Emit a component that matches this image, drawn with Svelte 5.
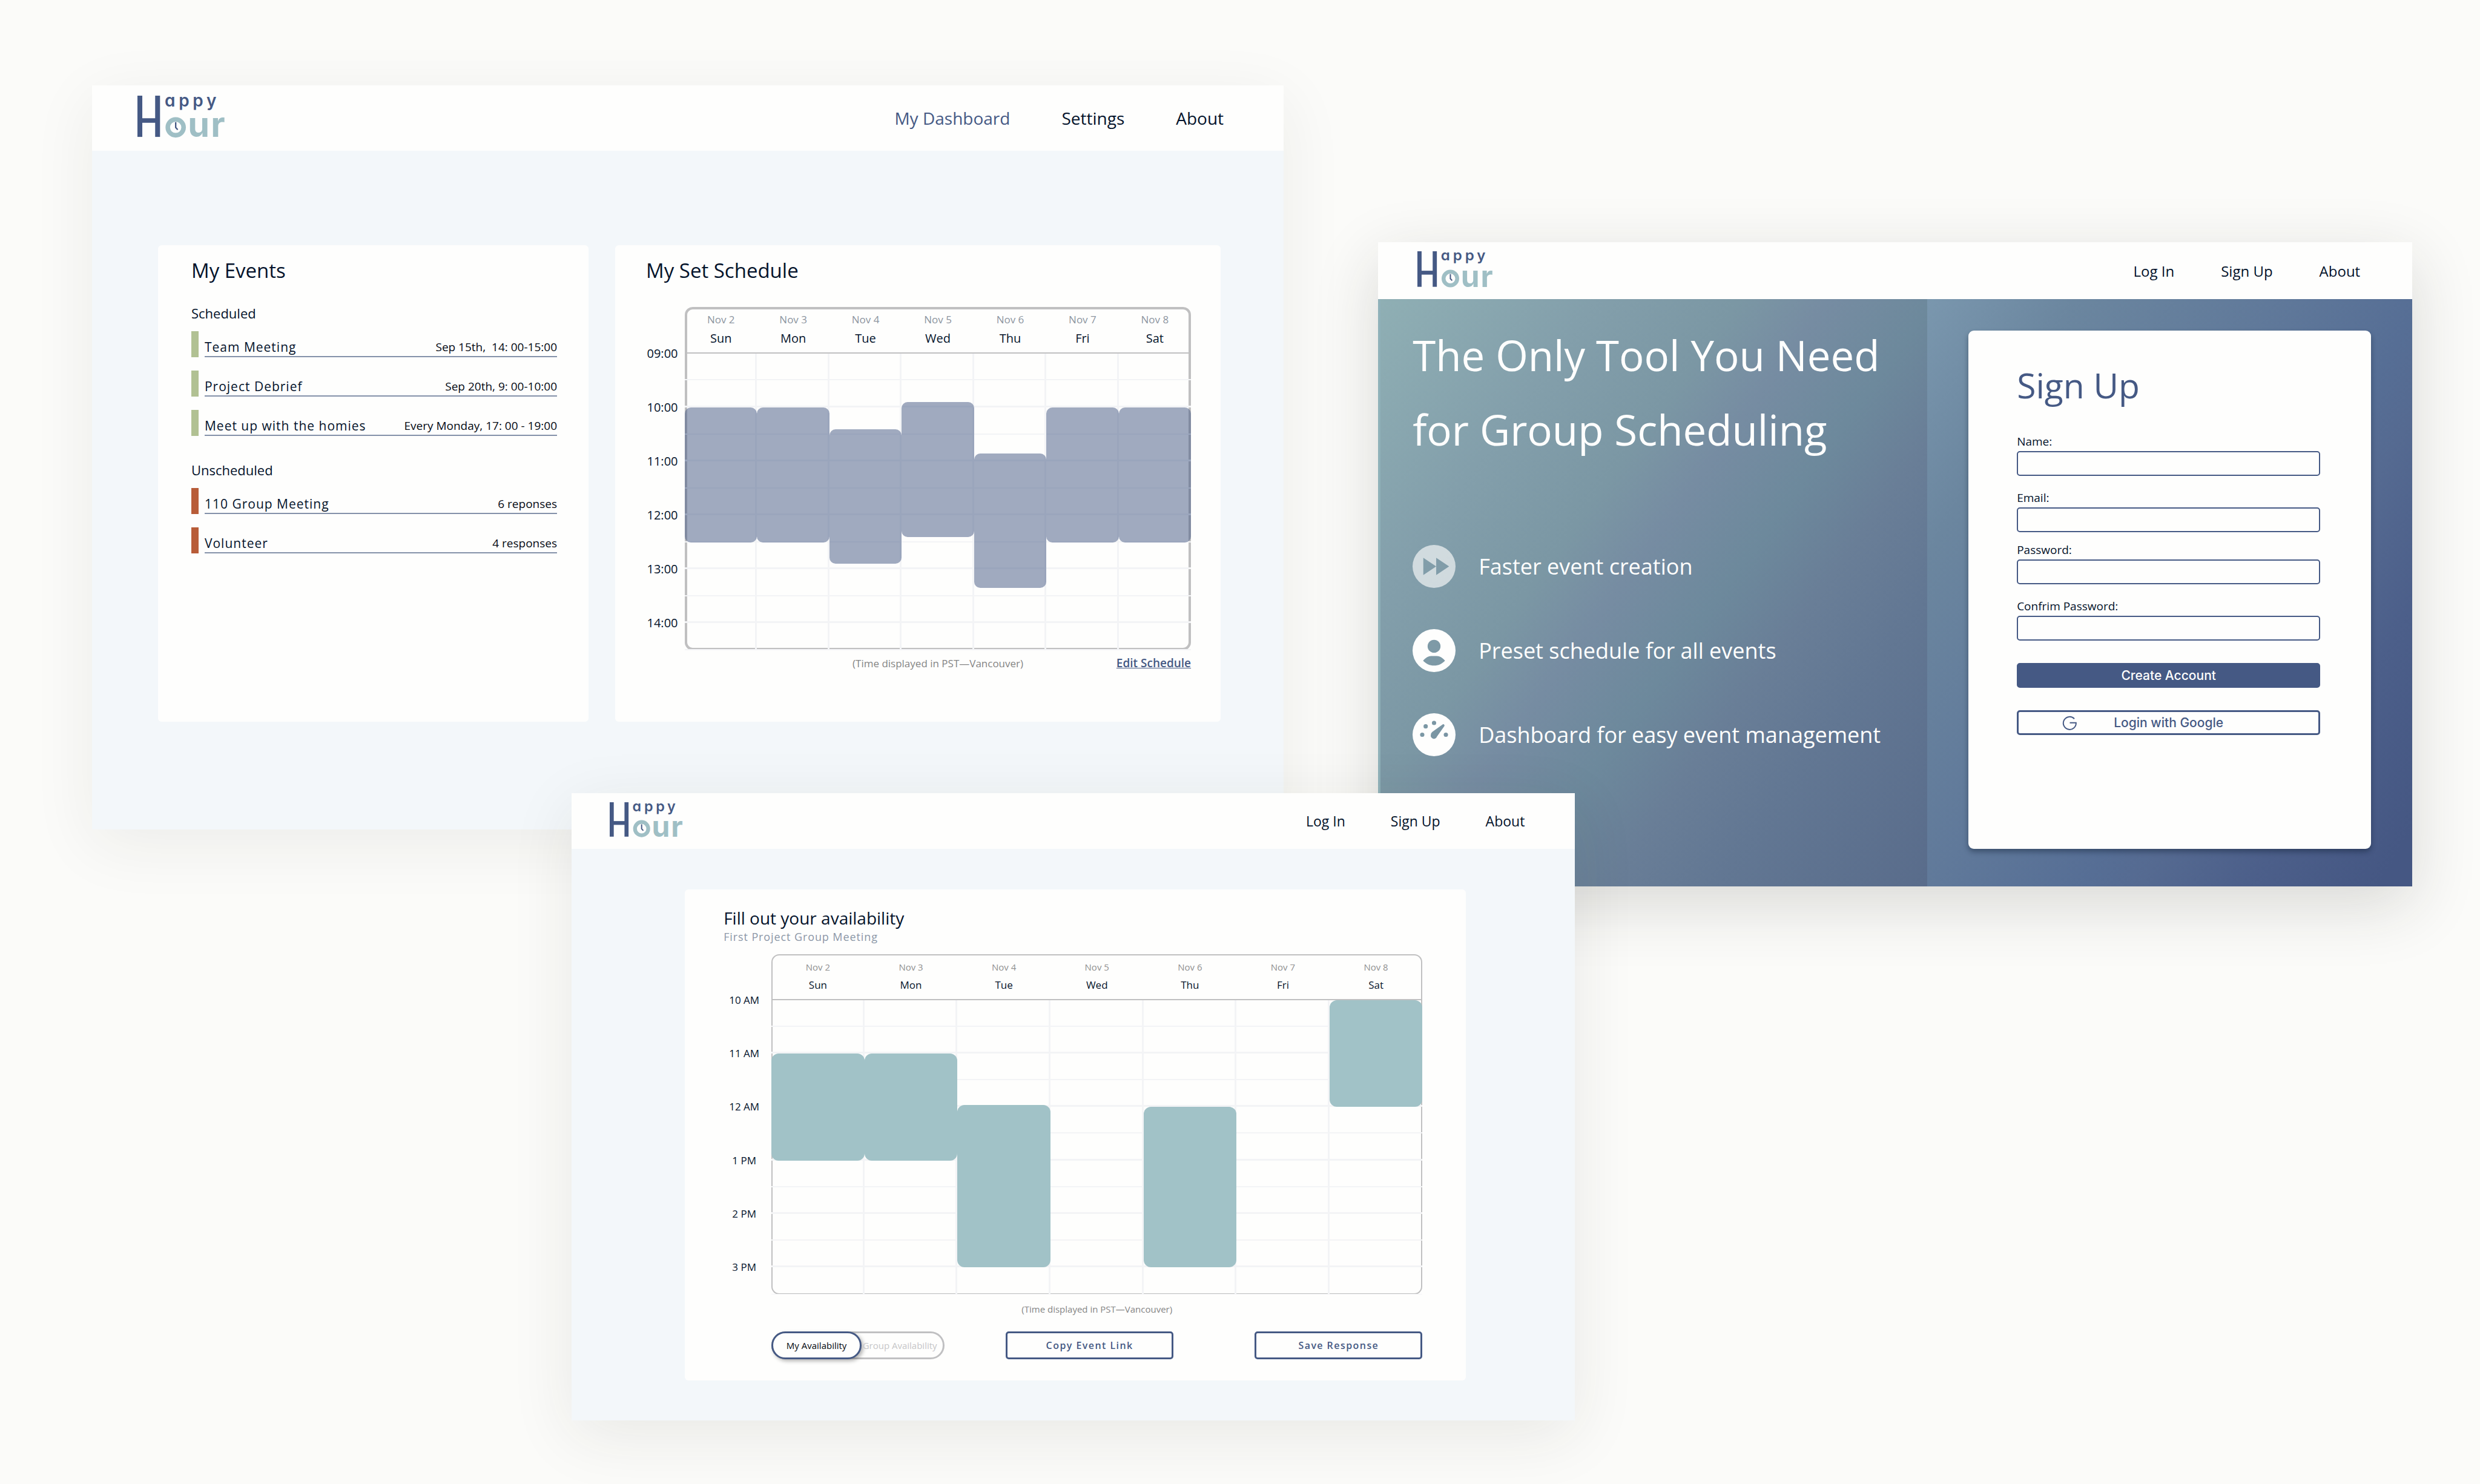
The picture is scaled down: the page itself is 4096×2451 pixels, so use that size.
<script>
  const scheduled = [
    { name: 'Team Meeting', when: 'Sep 15th,\u00a0 14: 00-15:00' },
    { name: 'Project Debrief', when: 'Sep 20th, 9: 00-10:00' },
    { name: 'Meet up with the homies', when: 'Every Monday, 17: 00 - 19:00' }
  ];
  const unscheduled = [
    { name: '110 Group Meeting', when: '6 reponses' },
    { name: 'Volunteer', when: '4 responses' }
  ];

  const days = ['Sun', 'Mon', 'Tue', 'Wed', 'Thu', 'Fri', 'Sat'].map((name, i) => ({
    name,
    date: `Nov ${i + 2}`
  }));
  const cells = Array.from({ length: 77 }, (_, i) => i);

  // Blocks are [day index, start hour, end hour].
  const schedule = {
    first: 9,
    labels: ['09:00', '10:00', '11:00', '12:00', '13:00', '14:00'],
    blocks: [
      [0, 10, 12.5],
      [1, 10, 12.5],
      [2, 10.4, 12.9],
      [3, 9.9, 12.4],
      [4, 10.85, 13.35],
      [5, 10, 12.5],
      [6, 10, 12.5]
    ]
  };
  const availability = {
    first: 10,
    labels: ['10 AM', '11 AM', '12 AM', '1 PM', '2 PM', '3 PM'],
    blocks: [
      [0, 11, 13],
      [1, 11, 13],
      [2, 11.96, 15],
      [4, 12, 15],
      [6, 10, 12]
    ]
  };

  const fields = [
    { id: 'name', label: 'Name:', type: 'text' },
    { id: 'email', label: 'Email:', type: 'email' },
    { id: 'password', label: 'Password:', type: 'password' },
    { id: 'confirm', label: 'Confrim Password:', type: 'password' }
  ];

  const hoursShown = 5.5;
  const share = (part, whole) => `${(part / whole) * 100}%`;
</script>

{#snippet logo()}
  <svg class="logo" viewBox="97 69 560 268" role="img" aria-label="Happy Hour">
    <g fill="#455984">
      <rect x="97" y="69" width="31" height="263" />
      <rect x="210" y="69" width="31" height="263" />
      <rect x="120" y="213" width="100" height="29" />
    </g>
    <text class="logo-top" x="271" y="138">appy</text>
    <circle cx="341" cy="271" r="50.5" fill="none" stroke="#9fbfc5" stroke-width="29" />
    <path d="M341 238V272L354 286" fill="none" stroke="#455984" stroke-width="9" />
    <text class="logo-bottom" x="419" y="332">ur</text>
  </svg>
{/snippet}

{#snippet topbar(links, current)}
  <header class="topbar">
    <a class="home" href="#home">{@render logo()}</a>
    <nav>
      {#each links as link}
        <a href="#top" class:current={link === current}>{link}</a>
      {/each}
    </nav>
  </header>
{/snippet}

{#snippet eventList(title, events, tone)}
  <section class="event-group">
    <h3>{title}</h3>
    <ul>
      {#each events as event}
        <li class={tone}>
          <div class="event">
            <span class="event-name">{event.name}</span>
            <span class="event-when">{event.when}</span>
          </div>
        </li>
      {/each}
    </ul>
  </section>
{/snippet}

{#snippet calendar(data)}
  <div class="calendar">
    <div class="hours">
      {#each data.labels as label}<span>{label}</span>{/each}
    </div>
    <div class="board">
      <div class="days">
        {#each days as day}
          <div class="day">
            <span class="date">{day.date}</span>
            <span class="weekday">{day.name}</span>
          </div>
        {/each}
      </div>
      <div class="slots">
        {#each cells as cell (cell)}<div class="cell"></div>{/each}
        {#each data.blocks as [day, from, to]}
          <div
            class="block"
            style:left={share(day, 7)}
            style:top={share(from - data.first, hoursShown)}
            style:height={share(to - from, hoursShown)}
          ></div>
        {/each}
      </div>
    </div>
  </div>
{/snippet}

<main class="stage">
  <section class="window dashboard">
    {@render topbar(['My Dashboard', 'Settings', 'About'], 'My Dashboard')}
    <div class="dashboard-body">
      <article class="card events-card">
        <h2>My Events</h2>
        {@render eventList('Scheduled', scheduled, 'green')}
        {@render eventList('Unscheduled', unscheduled, 'rust')}
      </article>
      <article class="card schedule-card">
        <h2>My Set Schedule</h2>
        {@render calendar(schedule)}
        <footer>
          <p class="note">(Time displayed in PST—Vancouver)</p>
          <a href="#edit">Edit Schedule</a>
        </footer>
      </article>
    </div>
  </section>

  <section class="window landing">
    {@render topbar(['Log In', 'Sign Up', 'About'], '')}
    <div class="hero">
      <div class="pitch">
        <h1>The Only Tool You Need<br />for Group Scheduling</h1>
        <ul class="features">
          <li>
            <svg class="faded" viewBox="-10 -10 20 20" aria-hidden="true">
              <path
                fill-rule="evenodd"
                d="M-10 0a10 10 0 1 0 20 0a10 10 0 1 0 -20 0zM-5 -4L1 0L-5 4zM1 -4L7 0L1 4z"
              />
            </svg>
            Faster event creation
          </li>
          <li>
            <svg viewBox="-10 -10 20 20" aria-hidden="true">
              <path
                fill-rule="evenodd"
                d="M-10 0a10 10 0 1 0 20 0a10 10 0 1 0 -20 0zM-3 -2a3 3 0 1 0 6 0a3 3 0 1 0 -6 0zM-5.1 4.7C-4 3.4 -2.6 2.55 -1.4 2.55H1.4C2.6 2.55 4 3.4 5.1 4.7C3.8 6.1 2 7 0 7C-2 7 -3.8 6.1 -5.1 4.7z"
              />
            </svg>
            Preset schedule for all events
          </li>
          <li>
            <svg viewBox="-10 -10 20 20" aria-hidden="true">
              <path
                fill-rule="evenodd"
                d="M-10 0a10 10 0 1 0 20 0a10 10 0 1 0 -20 0zM-6.5 0a1 1 0 1 0 2 0a1 1 0 1 0 -2 0zM-4.9 -3.9a1 1 0 1 0 2 0a1 1 0 1 0 -2 0zM-1 -5.5a1 1 0 1 0 2 0a1 1 0 1 0 -2 0zM4.5 0a1 1 0 1 0 2 0a1 1 0 1 0 -2 0zM-1.5 0Q-1.5 -.8 -.8 -1.35L3.9 -4.7A.55 .55 0 0 1 4.7 -3.9L1.4 .8A1.5 1.5 0 0 1 -1.5 0z"
              />
            </svg>
            Dashboard for easy event management
          </li>
        </ul>
      </div>
      <div class="join">
        <form class="signup" onsubmit={(e) => e.preventDefault()}>
          <h2>Sign Up</h2>
          {#each fields as field}
            <div class="field" class:tight={field.id === 'password'}>
              <label for={field.id}>{field.label}</label>
              <input id={field.id} type={field.type} />
            </div>
          {/each}
          <button class="create" type="submit">Create Account</button>
          <button class="google" type="button">
            <svg viewBox="0 0 24 24" aria-hidden="true">
              <path d="M20 5.2A10.5 10.5 0 1 0 22.8 11.8H12.5" fill="none" stroke="#455984" stroke-width="2" />
            </svg>
            <span>Login with Google</span>
          </button>
        </form>
      </div>
    </div>
  </section>

  <section class="window availability">
    {@render topbar(['Log In', 'Sign Up', 'About'], '')}
    <article class="card availability-card">
      <h2>Fill out your availability</h2>
      <p class="subtitle">First Project Group Meeting</p>
      {@render calendar(availability)}
      <p class="note">(Time displayed in PST—Vancouver)</p>
      <div class="actions">
        <div class="toggle" role="group" aria-label="Shown availability">
          <button class="mine" type="button" aria-pressed="true">My Availability</button>
          <button class="group" type="button" aria-pressed="false">Group Availability</button>
        </div>
        <button class="outlined" type="button">Copy Event Link</button>
        <button class="outlined save" type="button">Save Response</button>
      </div>
    </article>
  </section>
</main>

<style>
  :global(body) {
    background: #fbfbf9;
  }

  .stage {
    --navy: #455984;
    --ink: #04132b;
    --paper: #fefefd;
    position: relative;
    min-height: 100vh;
    overflow: hidden;
    background: #fbfbf9;
    color: var(--ink);
    font-family: 'Open Sans', 'Noto Sans', sans-serif;
  }

  h1,
  h2,
  h3,
  p,
  ul {
    margin: 0;
    padding: 0;
    font-weight: 400;
    list-style: none;
  }

  button,
  input {
    box-sizing: border-box;
    margin: 0;
    padding: 0;
    font-family: inherit;
  }

  .window {
    position: absolute;
    display: flex;
    flex-direction: column;
    background: #f3f7fa;
  }

  .dashboard {
    top: 5.75%;
    left: 3.71%;
    width: 48.05%;
    --head: 77px;
    --slots: 490px;
    --hours: 535px;
    --ring: 4px;
    box-shadow: 0 24px 100px rgba(40, 40, 30, 0.07);
  }

  .landing {
    top: 16.32%;
    left: 55.57%;
    width: 41.7%;
    box-shadow: 0 30px 100px rgba(40, 40, 30, 0.16);
  }

  .availability {
    top: 53.43%;
    left: 23.05%;
    width: 40.46%;
    --head: 76px;
    --slots: 486px;
    --hours: 530px;
    --ring: 2px;
    box-shadow: 0 24px 100px rgba(40, 40, 30, 0.09);
  }

  /* Top bar */
  .topbar {
    display: flex;
    align-items: center;
    justify-content: space-between;
    box-sizing: border-box;
    background: var(--paper);
  }

  .dashboard .topbar {
    min-height: 108px;
    padding: 0 99px 0 75px;
  }

  .landing .topbar {
    min-height: 94px;
    padding: 0 86px 0 65px;
  }

  .availability .topbar {
    min-height: 92px;
    padding: 0 83px 0 63px;
  }

  .home {
    padding-bottom: 4px;
  }

  .logo {
    display: block;
    width: 145px;
    overflow: visible;
  }

  .landing .logo {
    width: 125px;
  }

  .availability .logo {
    width: 121px;
  }

  .logo text {
    font-family: Inter, 'Open Sans', sans-serif;
    font-feature-settings: 'cv11';
  }

  .logo-top {
    fill: #455984;
    font-size: 108px;
    font-weight: 600;
    letter-spacing: 22px;
  }

  .logo-bottom {
    fill: #9fbfc5;
    font-size: 222px;
    font-weight: 700;
    letter-spacing: 8px;
  }

  nav {
    display: flex;
  }

  nav a {
    color: var(--ink);
    text-decoration: none;
  }

  nav a.current {
    color: var(--navy);
  }

  .dashboard nav {
    gap: 85px;
    font-size: 28px;
  }

  .landing nav {
    gap: 77px;
    font-size: 24px;
  }

  .availability nav {
    gap: 75px;
    font-size: 23px;
  }

  .card {
    box-sizing: border-box;
    border-radius: 6px;
    background: var(--paper);
  }

  /* Dashboard */
  .dashboard-body {
    display: grid;
    grid-template-columns: 711fr 1000fr;
    gap: 44px;
    padding: 156px 104px 178px 109px;
  }

  .dashboard h2 {
    font-size: 33px;
    line-height: 44px;
  }

  .events-card {
    min-height: 787px;
    padding: 20px 52px 20px 55px;
  }

  .event-group {
    margin-top: 33px;
  }

  .event-group + .event-group {
    margin-top: 41px;
  }

  h3 {
    font-size: 22px;
    line-height: 30px;
  }

  .event-group ul {
    display: grid;
    gap: 22px;
    margin-top: 15px;
  }

  .event-group li {
    display: flex;
    gap: 10px;
    height: 43px;
  }

  .event-group li::before {
    width: 12px;
    background: #b1c193;
    content: '';
  }

  .event-group li.rust::before {
    background: #b85c38;
  }

  .event {
    display: flex;
    flex: 1;
    align-items: flex-end;
    justify-content: space-between;
    border-bottom: 2px solid #8491a9;
    line-height: 30px;
  }

  .event-name {
    font-size: 21px;
    letter-spacing: 1px;
  }

  .event-when {
    color: #050a14;
    font-size: 19px;
  }

  .schedule-card {
    padding: 20px 49px 20px 51px;
  }

  .schedule-card .calendar {
    grid-template-columns: 54px 1fr;
    gap: 10px;
    margin-top: 38px;
  }

  .schedule-card footer {
    display: grid;
    grid-template-columns: 1fr auto 1fr;
    align-items: baseline;
    margin: 8px 0 0 64px;
    line-height: 26px;
  }

  .schedule-card .note {
    grid-column: 2;
    font-size: 17px;
  }

  .schedule-card footer a {
    justify-self: end;
    color: var(--navy);
    font-size: 19px;
    font-weight: 600;
  }

  .note {
    color: #858585;
  }

  /* Calendar */
  .calendar {
    display: grid;
  }

  .hours {
    display: grid;
    grid-template-rows: repeat(6, 1fr);
    height: var(--hours);
    padding-top: 32px;
    place-items: center;
    white-space: nowrap;
  }

  .board {
    border-radius: 13px;
    box-shadow: inset 0 0 0 var(--ring) #c0c0c1;
  }

  .days {
    display: grid;
    grid-template-columns: repeat(7, 1fr);
    box-sizing: border-box;
    height: var(--head);
    border-bottom: 2px solid #c0c0c1;
    text-align: center;
  }

  .day {
    display: flex;
    flex-direction: column;
  }

  .date {
    color: #8d95a0;
  }

  .dashboard .hours,
  .dashboard .weekday {
    font-size: 20px;
    line-height: 28px;
  }

  .dashboard .day {
    gap: 5px;
    padding-top: 9px;
  }

  .dashboard .date {
    font-size: 17px;
    line-height: 24px;
  }

  .availability .hours,
  .availability .weekday {
    font-size: 17px;
    line-height: 24px;
  }

  .availability .day {
    gap: 8px;
    padding-top: 11px;
  }

  .availability .date {
    color: #909090;
    font-size: 15px;
    line-height: 20px;
  }

  .slots {
    position: relative;
    display: grid;
    grid-template-rows: repeat(11, 1fr);
    grid-template-columns: repeat(7, 1fr);
    height: var(--slots);
  }

  .cell {
    border-right: 3px solid #f3f4f6;
    border-bottom: 2px solid #f3f4f6;
  }

  .cell:nth-child(7n) {
    border-right: 0;
  }

  .cell:nth-child(14n),
  .cell:nth-child(14n + 8),
  .cell:nth-child(14n + 9),
  .cell:nth-child(14n + 10),
  .cell:nth-child(14n + 11),
  .cell:nth-child(14n + 12),
  .cell:nth-child(14n + 13) {
    border-bottom-width: 3px;
  }

  .availability .cell:nth-child(n + 71) {
    border-bottom-width: 1px;
  }

  .block {
    position: absolute;
    width: calc(100% / 7);
    border-radius: 10px;
    background: rgba(69, 89, 132, 0.51);
  }

  .availability .block {
    border-radius: 12px;
    background: #a1c2c7;
  }

  /* Landing */
  .hero {
    display: grid;
    grid-template-columns: 907fr 801fr;
    box-sizing: border-box;
    min-height: 970px;
  }

  .pitch {
    padding: 31px 20px 20px 53px;
    border-left: 4px solid #8fb1b9;
    background: linear-gradient(
      126deg,
      #8fafb4 0%,
      #839fab 22%,
      #7b97a4 37%,
      #768ca2 46%,
      #6d899c 57%,
      #697e97 67%,
      #627793 78%,
      #596c8b 100%
    );
    color: var(--paper);
  }

  h1 {
    font-size: 69px;
    line-height: 123px;
    white-space: nowrap;
  }

  .features {
    display: grid;
    gap: 68px;
    margin-top: 129px;
  }

  .features li {
    display: flex;
    align-items: center;
    gap: 38px;
    font-size: 36px;
    line-height: 50px;
  }

  .features svg {
    width: 71px;
    height: 71px;
    fill: var(--paper);
  }

  .features .faded {
    opacity: 0.64;
  }

  .join {
    display: grid;
    padding: 52px 68px 62px;
    background: linear-gradient(120deg, #7a97ae 0%, #6b869f 18%, #60799a 42%, #566e95 60%, #556a91 67%, #4c5f8a 80%, #455783 96%);
  }

  .signup {
    display: flex;
    flex-direction: column;
    padding: 51px 84px 51px 80px;
    border-radius: 9px;
    background: var(--paper);
    box-shadow: 0 5px 8px rgba(10, 25, 45, 0.4);
  }

  .signup h2 {
    color: var(--navy);
    font-size: 57px;
    line-height: 78px;
  }

  .field {
    display: flex;
    flex-direction: column;
    gap: 3px;
    margin-top: 23px;
  }

  .signup h2 + .field {
    margin-top: 41px;
  }

  .field.tight {
    margin-top: 16px;
  }

  .field label {
    font-size: 19px;
    line-height: 26px;
  }

  .field input {
    width: 100%;
    height: 41px;
    padding: 0 12px;
    border: 2px solid var(--navy);
    border-radius: 5px;
    background: var(--paper);
    font-size: 19px;
  }

  .create,
  .google {
    height: 41px;
    margin-top: 37px;
    border: 3px solid var(--navy);
    border-radius: 5px;
    font-family: Inter, sans-serif;
    font-size: 21px;
    font-weight: 500;
  }

  .create {
    background: var(--navy);
    color: var(--paper);
  }

  .google {
    display: grid;
    grid-template-columns: 1fr auto 1fr;
    align-items: center;
    background: var(--paper);
    color: var(--navy);
  }

  .google svg {
    width: 24px;
    height: 24px;
    margin-left: 72px;
  }

  /* Availability */
  .availability-card {
    margin: 67px 180px 66px 187px;
    padding: 29px 72px 35px 64px;
  }

  .availability-card h2 {
    font-size: 28px;
    line-height: 37px;
  }

  .subtitle {
    color: #8c97a7;
    font-size: 18px;
    letter-spacing: 0.05em;
    line-height: 24px;
  }

  .availability-card .calendar {
    grid-template-columns: 68px 1fr;
    gap: 11px;
    margin-top: 17px;
  }

  .availability-card .note {
    margin: 14px 0 0 79px;
    font-size: 15px;
    line-height: 20px;
    text-align: center;
  }

  .actions {
    display: flex;
    margin: 27px 0 0 79px;
  }

  .toggle {
    display: flex;
    box-sizing: border-box;
    width: 286px;
    height: 46px;
    border: 3px solid #c0c0c2;
    border-radius: 23px;
  }

  .toggle button {
    border: 0;
    background: none;
    font-size: 15px;
    white-space: nowrap;
  }

  .toggle .mine {
    width: 149px;
    height: 46px;
    margin: -3px 0 0 -3px;
    border: 3px solid var(--navy);
    border-radius: 23px;
    background: var(--paper);
    box-shadow: 3px 3px 6px rgba(0, 0, 0, 0.3);
    color: #04080f;
  }

  .toggle .group {
    flex: 1;
    padding-right: 8px;
    color: #c6c6c8;
  }

  .outlined {
    width: 277px;
    height: 46px;
    margin-left: 101px;
    border: 3px solid var(--navy);
    border-radius: 5px;
    background: var(--paper);
    color: var(--navy);
    font-size: 16px;
    font-weight: 600;
    letter-spacing: 0.09em;
  }

  .outlined.save {
    margin-left: auto;
  }
</style>
